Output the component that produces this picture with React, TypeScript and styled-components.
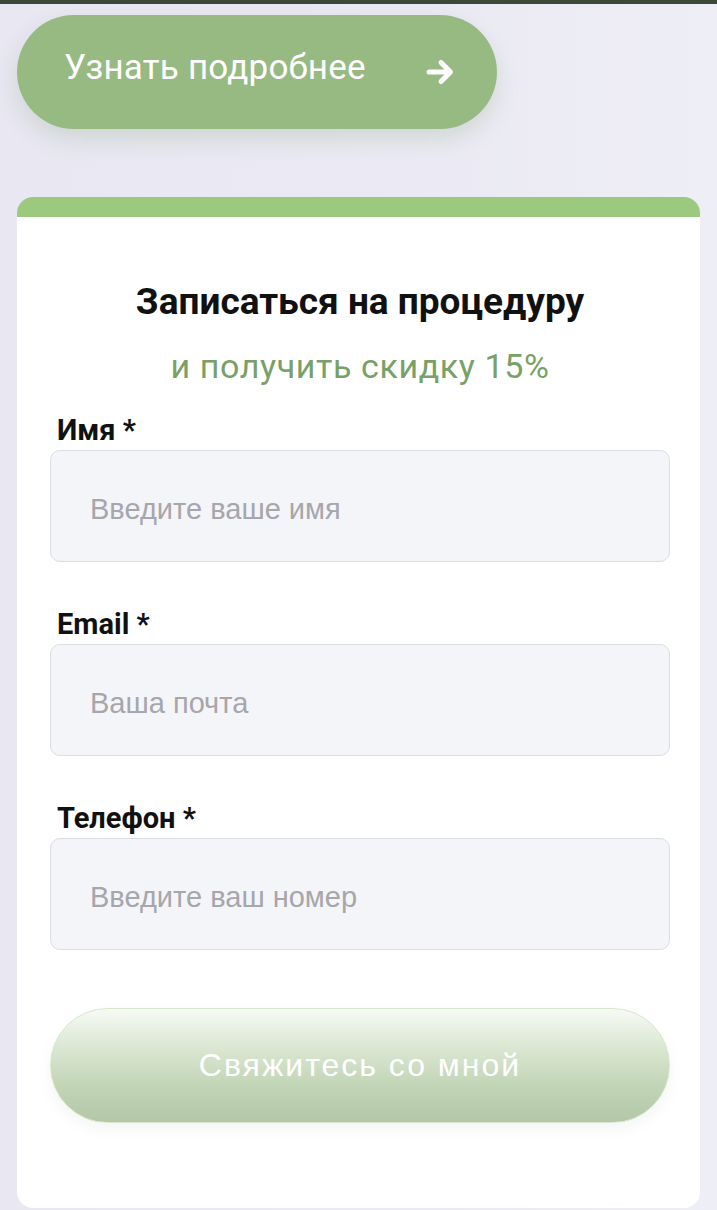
import React from "react";
import styled, { createGlobalStyle } from "styled-components";

const GlobalStyle = createGlobalStyle`
  html, body {
    margin: 0;
    padding: 0;
  }
  body {
    background: #e9e8f3;
    font-family: Roboto, "Noto Sans", sans-serif;
  }
  * { box-sizing: border-box; }
`;

const Page = styled.div`
  min-height: 1210px;
  background: linear-gradient(90deg, #e8e7f2 0%, #ebeaf4 60%, #eeeef6 100%);
  display: flex;
  flex-direction: column;
`;

const TopStrip = styled.div`
  height: 4px;
  background: #3b4a37;
`;

const HeroButton = styled.button`
  margin: 11px 0 0 17px;
  width: 480px;
  height: 114px;
  border: none;
  border-radius: 57px;
  background: #97b982;
  box-shadow: 0 10px 22px rgba(120, 150, 100, 0.22);
  display: flex;
  align-items: center;
  justify-content: space-between;
  padding: 0 41px 0 47px;
  color: #fff;
  font-family: Roboto, sans-serif;
  font-size: 35px;
  font-weight: 400;
  letter-spacing: 0.2px;
  cursor: pointer;
`;

const HeroLabel = styled.span`
  display: block;
  line-height: 40px;
  margin-top: -8px;
`;

const Card = styled.section`
  margin: 68px 17px 0 17px;
  background: #fff;
  border-radius: 16px;
  border-top: 20px solid #9bca7e;
  padding: 64px 30px 85px 33px;
  display: flex;
  flex-direction: column;
`;

const Title = styled.h2`
  margin: 0;
  text-align: center;
  font-family: Roboto, sans-serif;
  font-size: 37px;
  line-height: 42px;
  font-weight: 700;
  color: #111;
`;

const Subtitle = styled.p`
  margin: 24px 0 0 0;
  text-align: center;
  font-family: Roboto, sans-serif;
  font-size: 34px;
  line-height: 38px;
  font-weight: 400;
  letter-spacing: 0.6px;
  color: #78a067;
`;

const Form = styled.form`
  margin-top: 27px;
  display: flex;
  flex-direction: column;
  gap: 44px;
`;

const Field = styled.label`
  display: flex;
  flex-direction: column;
  gap: 2px;
`;

const FieldLabel = styled.span`
  padding-left: 7px;
  font-family: Roboto, sans-serif;
  font-size: 29px;
  line-height: 36px;
  font-weight: 700;
  color: #111;
`;

const Input = styled.input`
  height: 112px;
  width: 100%;
  border: 1.5px solid #dcdde3;
  border-radius: 10px;
  background: #f4f5f9;
  padding: 6px 0 0 39px;
  font-family: "Liberation Sans", Arial, sans-serif;
  font-size: 29px;
  color: #333;
  outline: none;
  &::placeholder {
    color: #a6a6ab;
  }
`;

const Submit = styled.button`
  margin-top: 14px;
  height: 115px;
  width: 100%;
  border: 1px solid #d8e6cb;
  border-radius: 58px;
  background: linear-gradient(180deg, #f7faf5 0%, #dde9d6 30%, #c4d6b8 65%, #b3c6a7 100%);
  box-shadow: 0 6px 14px rgba(150, 180, 140, 0.12);
  color: #fff;
  font-family: "Liberation Sans", Arial, sans-serif;
  font-size: 32px;
  letter-spacing: 2px;
  font-weight: 400;
  cursor: pointer;
`;

const Arrow = () => (
  <svg width="30" height="28" viewBox="0 0 30 28" fill="none">
    <path
      d="M3 14h21M15 4.5l9.5 9.5L15 23.5"
      stroke="#fff"
      strokeWidth="5"
      strokeLinecap="round"
      strokeLinejoin="round"
    />
  </svg>
);

export default function App() {
  return (
    <Page>
      <GlobalStyle />
      <TopStrip />
      <HeroButton type="button">
        <HeroLabel>Узнать подробнее</HeroLabel>
        <Arrow />
      </HeroButton>
      <Card>
        <Title>Записаться на процедуру</Title>
        <Subtitle>и получить скидку 15%</Subtitle>
        <Form onSubmit={(e) => e.preventDefault()}>
          <Field>
            <FieldLabel>Имя *</FieldLabel>
            <Input type="text" placeholder="Введите ваше имя" />
          </Field>
          <Field>
            <FieldLabel>Email *</FieldLabel>
            <Input type="email" placeholder="Ваша почта" />
          </Field>
          <Field>
            <FieldLabel>Телефон *</FieldLabel>
            <Input type="tel" placeholder="Введите ваш номер" />
          </Field>
          <Submit type="submit">Свяжитесь со мной</Submit>
        </Form>
      </Card>
    </Page>
  );
}
